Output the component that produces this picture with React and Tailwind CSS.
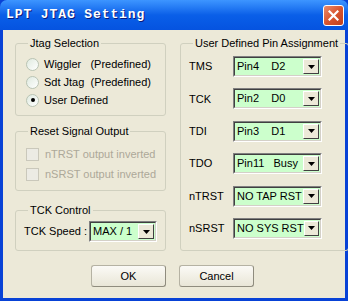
import { useState } from "react";

const ui = { fontFamily: '"Liberation Sans", Arial, sans-serif' };

function Group({ title, className, children }) {
  return (
    <fieldset className={`border border-[#d0d0bf] rounded-[3px] ${className}`}>
      <legend className="ml-[4px] px-[2px] text-[11px] leading-[14px] text-black whitespace-nowrap">{title}</legend>
      {children}
    </fieldset>
  );
}

function Radio({ checked, label, onClick }) {
  return (
    <div className="flex items-center h-[18px] cursor-default" onClick={onClick}>
      <span className="w-[13px] h-[13px] rounded-full border border-[#b9c4b4] bg-gradient-to-br from-[#dfeadf] to-[#ffffff] flex items-center justify-center ml-[2px]">
        {checked && <span className="w-[4px] h-[4px] rounded-full bg-black" />}
      </span>
      <span className="ml-[5px] text-[11px] whitespace-pre">{label}</span>
    </div>
  );
}

function Check({ label }) {
  return (
    <div className="flex items-center h-[20px]">
      <span className="w-[13px] h-[13px] border border-[#cac8bb] bg-[#ecebe4] ml-[2px]" />
      <span className="ml-[6px] text-[11px] text-[#aca899]">{label}</span>
    </div>
  );
}

function Combo({ value, width }) {
  return (
    <div
      className="flex items-center h-[21px] border border-t-[#808080] border-l-[#808080] border-b-white border-r-white bg-[#ccffcc]"
      style={{ width }}
    >
      <div className="flex-1 flex items-center h-full border border-t-[#404040] border-l-[#404040] border-b-[#d4d0c8] border-r-[#d4d0c8] pl-[2px] overflow-hidden">
        <span className="text-[11px] whitespace-pre leading-none">{value}</span>
        <span className="flex-1" />
        <span className="w-[16px] h-[15px] mr-[1px] bg-[#ece9d8] border border-t-white border-l-white border-b-[#404040] border-r-[#404040] flex items-center justify-center">
          <svg width="7" height="4" viewBox="0 0 7 4"><path d="M0 0h7L3.5 4z" fill="#000" /></svg>
        </span>
      </div>
    </div>
  );
}

function PinRow({ label, value }) {
  return (
    <div className="flex items-center h-[21px]">
      <span className="w-[44px] text-[11px]">{label}</span>
      <Combo value={value} width={89} />
    </div>
  );
}

function Button({ children }) {
  return (
    <button className="w-[75px] h-[22px] rounded-[3px] border border-[#b5b2a3] border-b-[#8f8c7e] border-r-[#8f8c7e] bg-gradient-to-b from-[#fbfaf6] to-[#e9e6d7] text-[11px] text-black">
      {children}
    </button>
  );
}

export default function App() {
  const [mode, setMode] = useState(2);
  return (
    <div className="w-[348px] h-[301px] flex flex-col bg-[#0842d6]" style={ui}>
      <div className="h-[30px] rounded-t-[7px] bg-gradient-to-b from-[#3d95ff] via-[#0a5fe8] to-[#0553e0] flex items-center pl-[6px] pr-[4px]">
        <span
          className="text-white font-bold text-[13px] tracking-[0.9px] [text-shadow:1px_1px_0_#0a1a7a]"
          style={{ fontFamily: '"Liberation Mono", "DejaVu Sans Mono", monospace' }}
        >
          LPT JTAG Setting
        </span>
        <span className="flex-1" />
        <span className="w-[21px] h-[21px] rounded-[3px] border border-white bg-gradient-to-br from-[#e98b6c] via-[#d9552f] to-[#c0401c] flex items-center justify-center">
          <svg width="11" height="11" viewBox="0 0 11 11">
            <path d="M1.5 1.5l8 8M9.5 1.5l-8 8" stroke="#fff" strokeWidth="2.2" strokeLinecap="square" />
          </svg>
        </span>
      </div>
      <div className="flex-1 mx-[3px] mb-[3px] bg-[#ece9d8] flex flex-col">
        <div className="flex pl-[12px] pt-[6px] gap-[14px]">
          <div className="w-[151px] flex flex-col">
            <Group title="Jtag Selection" className="h-[80px] px-2 pt-[5px]">
              <Radio checked={mode === 0} label="Wiggler   (Predefined)" onClick={() => setMode(0)} />
              <Radio checked={mode === 1} label="Sdt Jtag  (Predefined)" onClick={() => setMode(1)} />
              <Radio checked={mode === 2} label="User Defined" onClick={() => setMode(2)} />
            </Group>
            <Group title="Reset Signal Output" className="h-[67px] px-2 mt-[8px] pt-[6px]">
              <Check label="nTRST output inverted" />
              <Check label="nSRST output inverted" />
            </Group>
            <Group title="TCK Control" className="h-[48px] px-2 mt-[12px] pt-[4px]">
              <div className="flex items-center">
                <span className="text-[11px] w-[65px]">TCK Speed :</span>
                <Combo value="MAX / 1" width={68} />
              </div>
            </Group>
          </div>
          <Group title="User Defined Pin Assignment" className="w-[154px] h-[215px] px-2 pt-[6px]">
            <div className="flex flex-col gap-[11.4px]">
              <PinRow label="TMS" value="Pin4    D2" />
              <PinRow label="TCK" value="Pin2    D0" />
              <PinRow label="TDI" value="Pin3    D1" />
              <PinRow label="TDO" value="Pin11   Busy" />
              <PinRow label="nTRST" value="NO TAP RST" />
              <PinRow label="nSRST" value="NO SYS RST" />
            </div>
          </Group>
        </div>
        <div className="flex pl-[88px] gap-[13px] mt-[14px]">
          <Button>OK</Button>
          <Button>Cancel</Button>
        </div>
      </div>
    </div>
  );
}
